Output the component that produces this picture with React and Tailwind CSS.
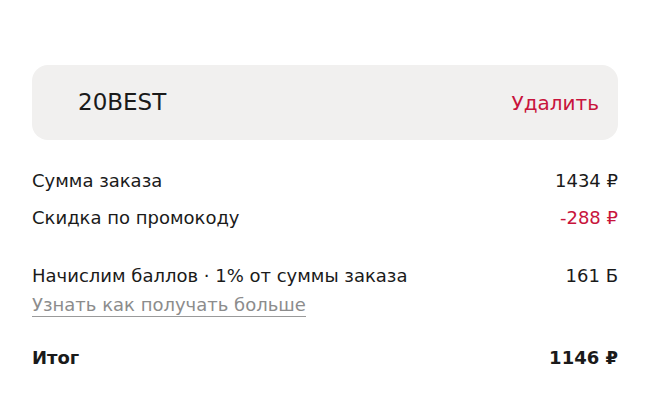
export default function App() {
  return (
    <div className="h-[408px] w-[650px] bg-white pt-[65px] font-['DejaVu_Sans',sans-serif] text-[#1a1a1a]">
      <div className="mx-[32px] flex h-[75px] items-center justify-between rounded-[16px] bg-[#f1f0ef] pl-[46px] pr-[19px]">
        <span className="text-[23px]">20BEST</span>
        <button className="text-[20px] text-[#c8143c]">Удалить</button>
      </div>

      <div className="mx-[32px] mt-[21px] flex flex-col text-[18px]">
        <div className="flex h-[38px] items-center justify-between">
          <span>Сумма заказа</span>
          <span>1434 ₽</span>
        </div>
        <div className="flex h-[37px] items-center justify-between">
          <span>Скидка по промокоду</span>
          <span className="text-[#c8143c]">-288 ₽</span>
        </div>
        <div className="mt-[20px] flex h-[38px] items-center justify-between">
          <span>Начислим баллов · 1% от суммы заказа</span>
          <span>161 Б</span>
        </div>
        <div className="flex">
          <a className="border-b border-[#9a9a9a] leading-[22px] text-[#8c8c8c]">Узнать как получать больше</a>
        </div>
        <div className="mt-[21px] flex h-[38px] items-center justify-between font-bold">
          <span>Итог</span>
          <span>1146 ₽</span>
        </div>
      </div>
    </div>
  );
}
